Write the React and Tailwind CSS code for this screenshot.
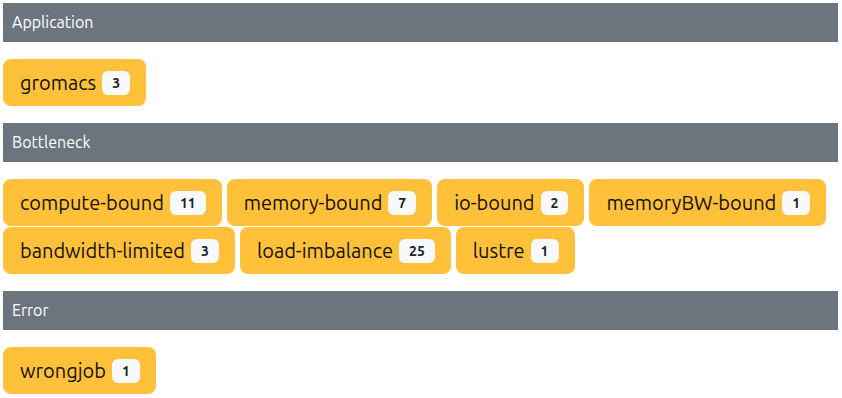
const sections = [
  { title: "Application", tags: [["gromacs", 3]] },
  {
    title: "Bottleneck",
    tags: [
      ["compute-bound", 11],
      ["memory-bound", 7],
      ["io-bound", 2],
      ["memoryBW-bound", 1],
      ["bandwidth-limited", 3],
      ["load-imbalance", 25],
      ["lustre", 1],
    ],
  },
  { title: "Error", tags: [["wrongjob", 1]] },
];

export default function App() {
  return (
    <div
      className="w-[842px] h-[398px] bg-white pl-[3px] pr-[4px] pt-[3px] overflow-hidden"
      style={{ fontFamily: '"Ubuntu", "Noto Sans", "Open Sans", sans-serif' }}
    >
      {sections.map((s) => (
        <div key={s.title} className="mb-[17px]">
          <div className="h-[39px] bg-[#6c757d] text-white text-[16px] leading-[39px] pl-[9px] mb-[17px]">
            {s.title}
          </div>
          <div className="flex flex-wrap gap-x-[5px] gap-y-[1px]">
            {s.tags.map(([name, n]) => (
              <div
                key={name}
                className="flex items-center h-[47px] pl-[17px] pr-[16px] rounded-[8px] bg-[#ffc03a] text-[#111] text-[20px]"
              >
                <span>{name}</span>
                <span className="ml-[6px] inline-flex items-center justify-center h-[24px] px-[10px] rounded-[6px] bg-[#f8f9fa] text-[#212529] text-[14px] font-bold leading-none">
                  {n}
                </span>
              </div>
            ))}
          </div>
        </div>
      ))}
    </div>
  );
}
